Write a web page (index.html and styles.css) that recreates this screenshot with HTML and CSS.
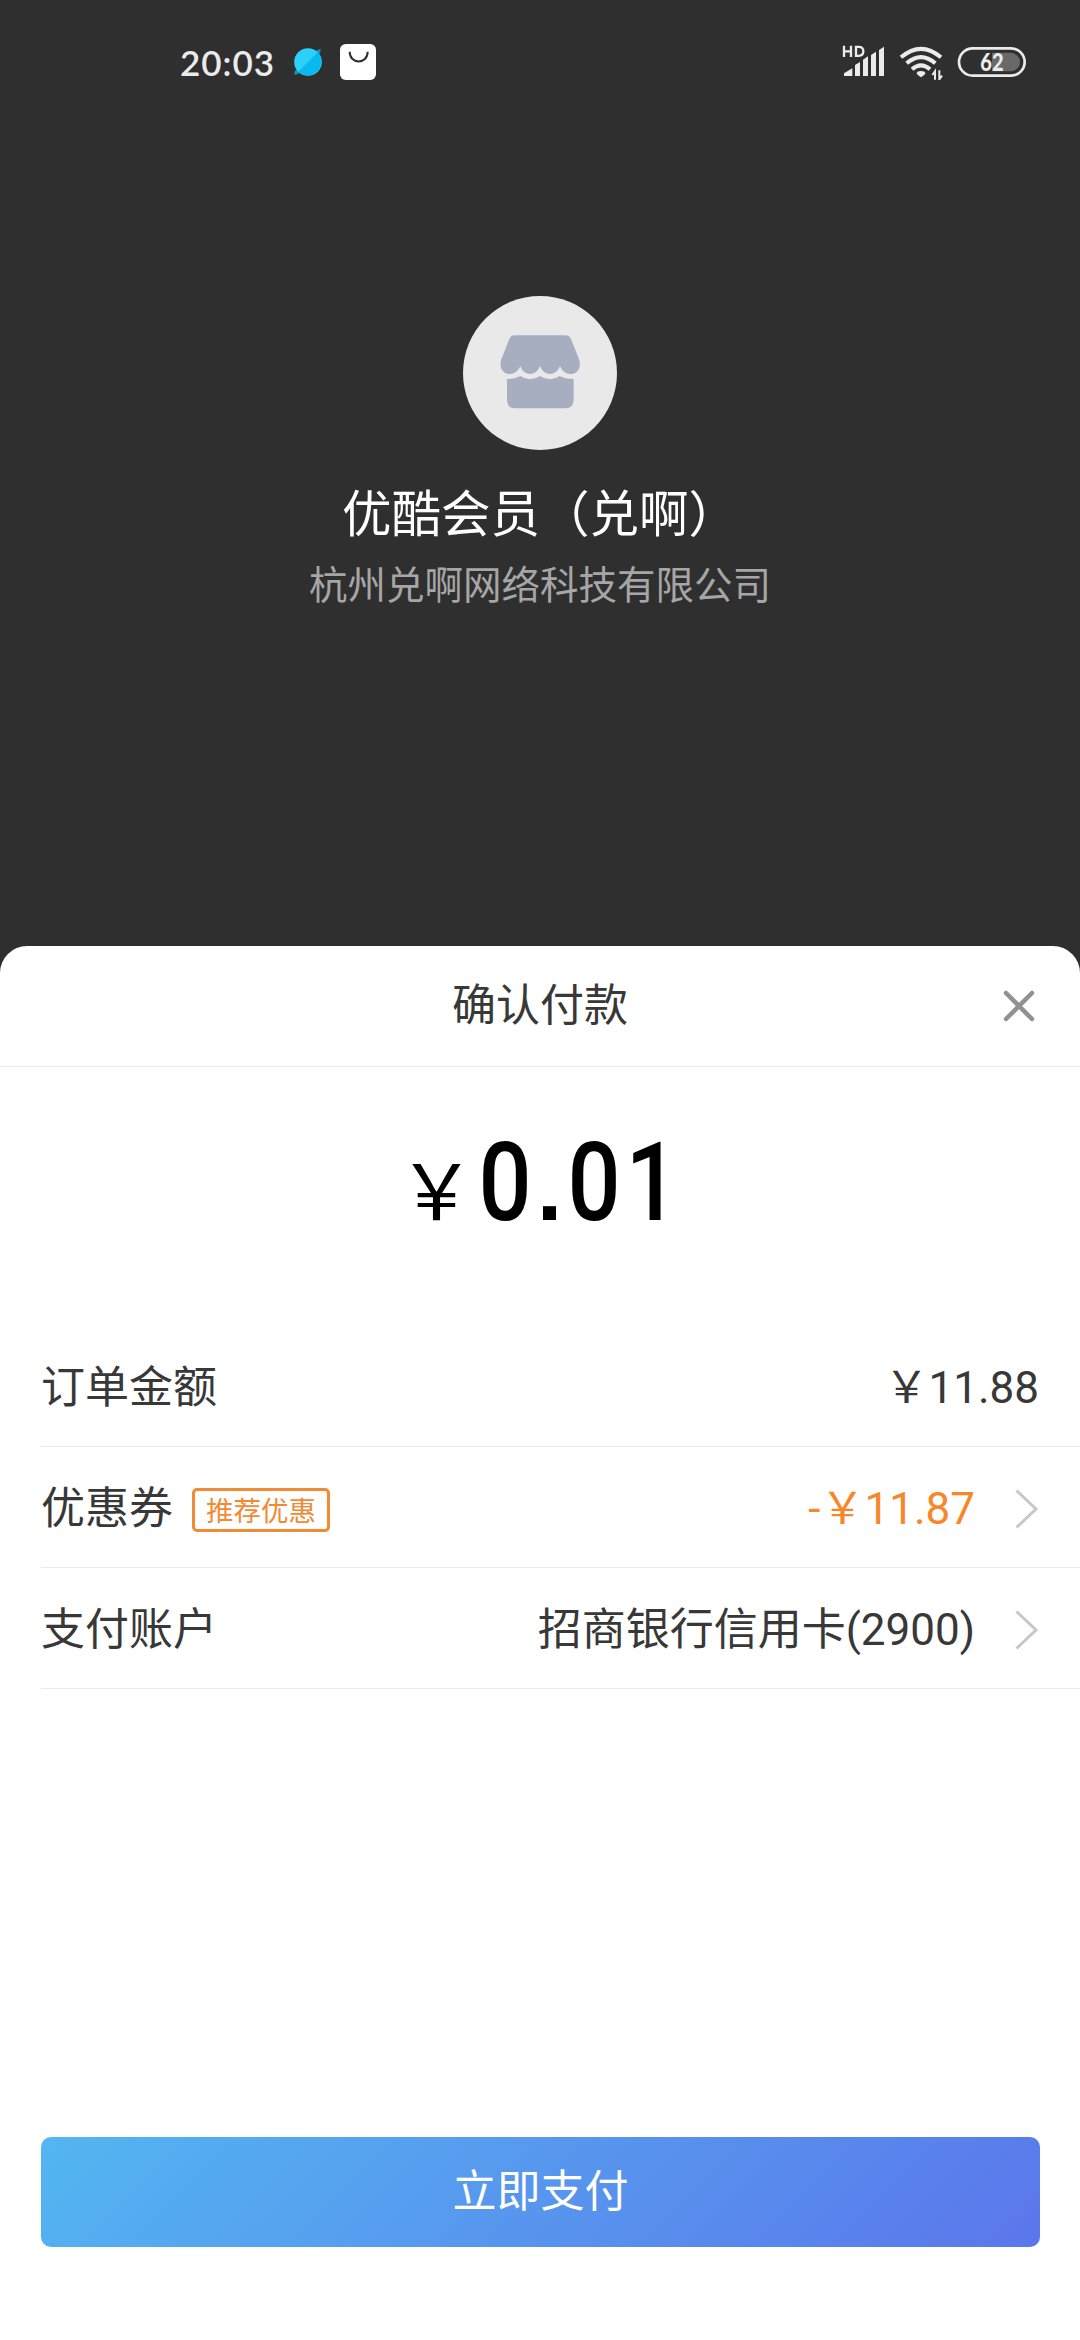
FILE: index.html
```html
<!DOCTYPE html>
<html lang="zh-CN">
<head>
<meta charset="utf-8">
<title>确认付款</title>
<link rel="stylesheet" href="styles.css">
</head>
<body>
<div class="screen">
  <header class="status">
    <div class="status-left">
      <span class="clock">20:03</span>
      <svg class="planet" width="30" height="30" viewBox="0 0 90 90">
        <path d="M5 84L4 74L72 10L83 5L82 16L16 80Z" fill="#1590b8"/>
        <circle cx="45" cy="45" r="41.500" fill="#2dcffb"/>
        <path d="M74.300 15.700A41.500 41.500 0 0 1 15.700 74.300Z" fill="#07b9ee"/>
      </svg>
      <svg class="bag" width="36" height="36" viewBox="0 0 108 108">
        <rect width="108" height="108" rx="17" fill="#fff"/>
        <path d="M29 23C29 62 83 62 83 23" fill="none" stroke="#2f2f2f" stroke-width="6"/>
      </svg>
    </div>
    <svg class="indicators" width="186" height="36" viewBox="66 42 558 108">
      <g fill="#ebebeb">
        <path d="M72 138v-8l25-15v23zM105 138v-33l15-9v42zM129 138v-49l15-10v59zM153 138v-63l15-10v73zM177 138v-78l15-10v88z"/>
        <path d="M290 130q1-7 13-7t13 7q0 3-13 12q-13-9-13-12z"/>
      </g>
      <g fill="none" stroke="#ebebeb" stroke-width="7">
        <path d="M72 47v34M93 47v34M72 64h21M108 50.500v27h8q14 0 14-13.500t-14-13.500z"/>
        <g stroke-width="12">
          <path d="M243 82q60-51 120 0M260 100q43-37 86 0M276 118q27-24 54 0"/>
        </g>
        <path d="M345 149v-25l-8 11M358 121v27l8-11" stroke-width="6"/>
        <rect x="417" y="55" width="197" height="82" rx="41" stroke-width="8"/>
      </g>
      <path d="M516 68h56a28 28 0 0 1 0 56h-56z" fill="#696969"/>
      <text class="charge" x="481" y="122" textLength="70" lengthAdjust="spacingAndGlyphs">62</text>
    </svg>
  </header>

  <section class="merchant">
    <svg class="avatar" width="154" height="154" viewBox="0 0 462 462">
      <circle cx="231" cy="231" r="231" fill="#e9e9e9"/>
      <g fill="#a7aec0">
        <path d="M155 118h152q13 0 18 13l23 59c8 24-4 44-26 44q-20 0-31-23q-10 23-30 23t-30-23q-10 23-30 23t-29-23q-11 23-31 23c-22 0-34-20-26-44l23-59q5-13 17-13z"/>
        <path d="M132 249q24 0 40-9q29 20 59 0q30 20 59 0q16 9 42 9v61q0 27-24 27H157q-25 0-25-27z"/>
      </g>
    </svg>
    <h1 class="merchant-name">优酷会员（兑啊）</h1>
    <p class="merchant-company">杭州兑啊网络科技有限公司</p>
  </section>

  <main class="sheet">
    <div class="sheet-head">
      <h2 class="sheet-title">确认付款</h2>
      <svg class="close" width="32" height="32" viewBox="0 0 32 32">
        <path d="M3 3L29 29M29 3L3 29" fill="none" stroke="#919191" stroke-width="4.500" stroke-linecap="round"/>
      </svg>
    </div>
    <div class="total"><span class="yen">￥</span><span class="num">0</span><span class="dot">.</span><span class="num">0</span><span class="num">1</span></div>
    <div class="rows">
      <div class="row">
        <span>订单金额</span>
        <span class="value">￥11.88</span>
      </div>
      <div class="row">
        <span>优惠券</span>
        <span class="tag">推荐优惠</span>
        <span class="value discount">-￥11.87</span>
        <svg class="chevron" width="24" height="40" viewBox="0 0 24 40"><path d="M1.500 1.500L21 20L1.500 38.500" fill="none" stroke="#c7c7c7" stroke-width="3"/></svg>
      </div>
      <div class="row">
        <span>支付账户</span>
        <span class="value">招商银行信用卡(2900)</span>
        <svg class="chevron" width="24" height="40" viewBox="0 0 24 40"><path d="M1.500 1.500L21 20L1.500 38.500" fill="none" stroke="#c7c7c7" stroke-width="3"/></svg>
      </div>
    </div>
    <button class="pay" type="button">立即支付</button>
  </main>
</div>
</body>
</html>
```
FILE: styles.css
```css
* { box-sizing: border-box; }
body { margin: 0; background: #2f2f2f; }
.screen {
  width: 1080px;
  height: 2340px;
  display: flex;
  flex-direction: column;
  background: #2f2f2f;
  font-family: Roboto, "Noto Sans CJK SC", sans-serif;
  color: #383838;
}
h1, h2, p { margin: 0; font-weight: 400; }
svg { display: block; flex: none; }

.status {
  height: 124px;
  padding: 0 52px 0 180px;
  display: flex;
  align-items: center;
  justify-content: space-between;
}
.status-left { display: flex; align-items: center; }
.clock {
  width: 113px;
  font-family: "Lato Semibold", Lato, sans-serif;
  font-weight: 600;
  font-size: 35px;
  line-height: 40px;
  letter-spacing: 1px;
  color: #ebebeb;
  white-space: nowrap;
}
.bag { margin-left: 17px; }
.charge {
  font-family: Lato, sans-serif;
  font-weight: 900;
  font-size: 72px;
  fill: #ebebeb;
}

.merchant {
  height: 822px;
  padding-top: 172px;
  display: flex;
  flex-direction: column;
  align-items: center;
}
.merchant-name {
  margin-top: 29px;
  font-size: 49.5px;
  line-height: 72px;
  color: #fff;
}
.merchant-company {
  margin-top: 8px;
  font-size: 38.5px;
  line-height: 54px;
  color: #a6a6a6;
}

.sheet {
  flex: 1;
  display: flex;
  flex-direction: column;
  background: #fff;
  border-radius: 27px 27px 0 0;
}
.sheet-head {
  height: 121px;
  padding: 0 45px;
  display: grid;
  grid-template-columns: 1fr auto 1fr;
  align-items: center;
  border-bottom: 1px solid #ebebeb;
}
.sheet-title {
  grid-column: 2;
  font-size: 44px;
  line-height: 60px;
}
.close { justify-self: end; }
.total {
  height: 259px;
  padding: 51px 0 0 398px;
  display: flex;
  align-items: baseline;
  line-height: 130px;
  color: #000;
  white-space: nowrap;
}
.yen { width: 78px; font-size: 77px; }
.num {
  width: 58px;
  display: flex;
  justify-content: center;
  font-size: 110px;
  font-weight: 500;
  transform: scaleX(0.85);
}
.dot {
  width: 31px;
  display: flex;
  justify-content: center;
  font-family: "Liberation Sans", sans-serif;
  font-weight: 700;
  font-size: 92px;
}

.rows { padding-left: 41px; }
.row {
  height: 121px;
  padding: 4px 41px 0 0;
  display: flex;
  align-items: center;
  border-bottom: 1px solid #ebebeb;
  font-size: 44px;
  line-height: 60px;
  white-space: nowrap;
}
.tag {
  height: 44px;
  margin: 2px 0 0 19px;
  padding: 0 11px;
  border: 3px solid #f28a33;
  border-radius: 5px;
  font-size: 27.5px;
  line-height: 42px;
  color: #f28a33;
}
.value { margin-left: auto; }
.discount { color: #f9872a; }
.chevron { margin-left: 40px; }

.pay {
  height: 110px;
  margin: auto 40px 93px 41px;
  padding: 0 0 8px;
  border: 0;
  border-radius: 10px;
  background: linear-gradient(135deg, #53b6f1, #5b76eb);
  font: inherit;
  font-size: 44px;
  color: #fff;
}
```
